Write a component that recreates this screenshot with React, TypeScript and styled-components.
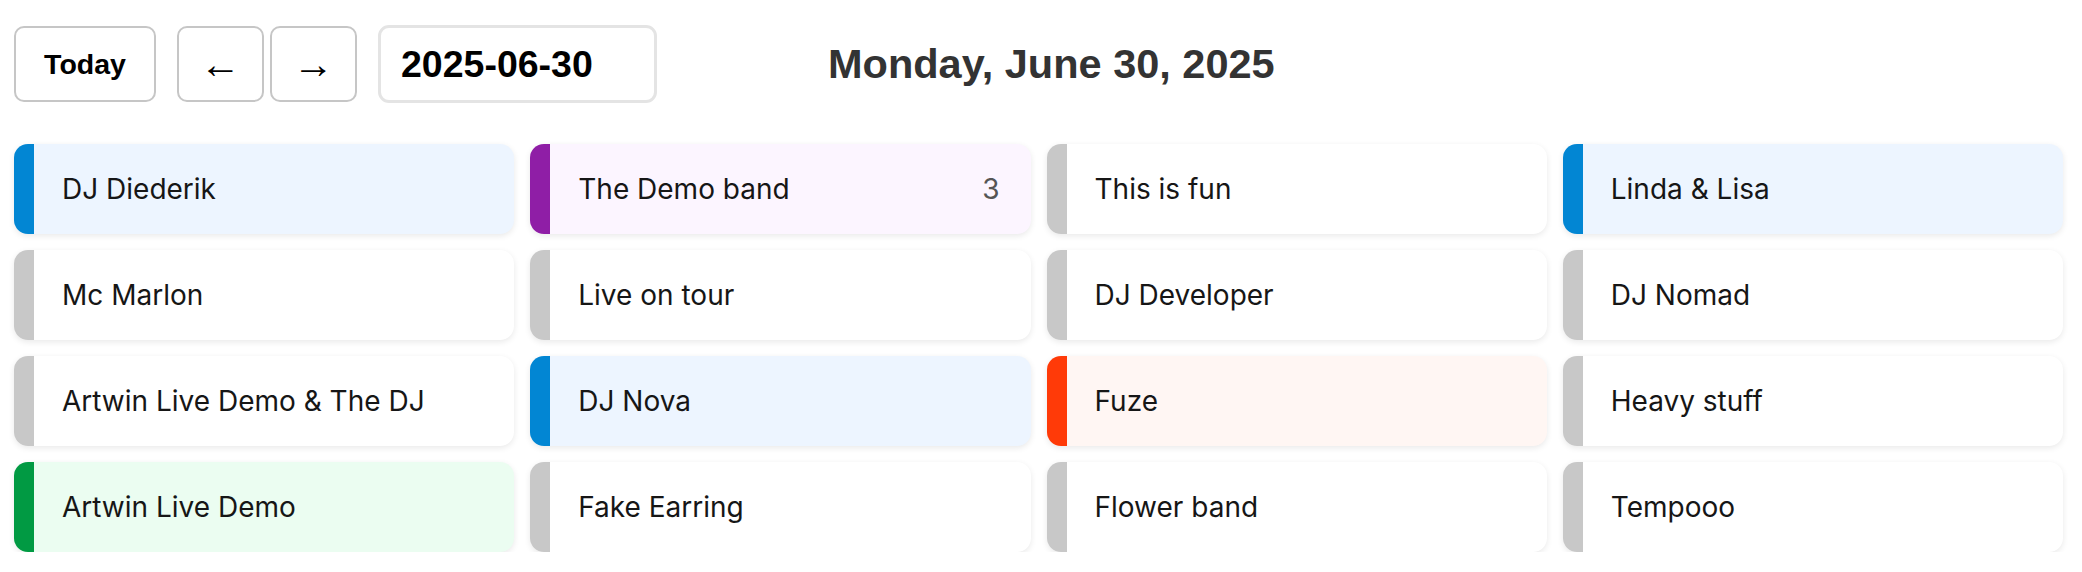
import React from "react";
import styled, { createGlobalStyle } from "styled-components";

type Tone = "blue" | "purple" | "gray" | "red" | "green";

type Act = {
    name: string;
    tone: Tone;
    count?: number;
};

const tones: Record<Tone, { bar: string; bg: string }> = {
    blue: { bar: "#0286d3", bg: "#edf5ff" },
    purple: { bar: "#8f1ea6", bg: "#fcf5ff" },
    gray: { bar: "#c8c8c8", bg: "#ffffff" },
    red: { bar: "#ff3a08", bg: "#fff6f3" },
    green: { bar: "#019a43", bg: "#ebfdf1" },
};

const acts: Act[] = [
    { name: "DJ Diederik", tone: "blue" },
    { name: "The Demo band", tone: "purple", count: 3 },
    { name: "This is fun", tone: "gray" },
    { name: "Linda & Lisa", tone: "blue" },
    { name: "Mc Marlon", tone: "gray" },
    { name: "Live on tour", tone: "gray" },
    { name: "DJ Developer", tone: "gray" },
    { name: "DJ Nomad", tone: "gray" },
    { name: "Artwin Live Demo & The DJ", tone: "gray" },
    { name: "DJ Nova", tone: "blue" },
    { name: "Fuze", tone: "red" },
    { name: "Heavy stuff", tone: "gray" },
    { name: "Artwin Live Demo", tone: "green" },
    { name: "Fake Earring", tone: "gray" },
    { name: "Flower band", tone: "gray" },
    { name: "Tempooo", tone: "gray" },
];

const GlobalStyle = createGlobalStyle`
    body {
        margin: 0;
        background: #ffffff;
        font-family: Inter, "Noto Sans", sans-serif;
    }
`;

export default function App() {
    return (
        <>
            <GlobalStyle />
            <SPage>
                <SHeader>
                    <STodayButton>Today</STodayButton>
                    <SArrows>
                        <SArrowButton aria-label="previous day">←</SArrowButton>
                        <SArrowButton aria-label="next day">→</SArrowButton>
                    </SArrows>
                    <SDateInput type="text" defaultValue="2025-06-30" />
                    <STitle>Monday, June 30, 2025</STitle>
                </SHeader>

                <SGrid>
                    {acts.map((act) => (
                        <SCard key={act.name} tone={act.tone}>
                            <SBar tone={act.tone} />
                            <SCardBody>
                                <SName>{act.name}</SName>
                                {act.count !== undefined && <SCount>{act.count}</SCount>}
                            </SCardBody>
                        </SCard>
                    ))}
                </SGrid>
            </SPage>
        </>
    );
}

const SPage = styled.div`
    padding: 25px 19px 0 14px;
    box-sizing: border-box;
`;

const SHeader = styled.div`
    display: flex;
    align-items: center;
    height: 78px;
    margin-bottom: 41px;
`;

const SButton = styled.button`
    height: 76px;
    background: #ffffff;
    border: 2px solid #c6c6c6;
    border-radius: 10px;
    box-sizing: border-box;
    color: #000000;
    cursor: pointer;
    padding: 0;
`;

const STodayButton = styled(SButton)`
    width: 142px;
    font-family: "Liberation Sans", Arial, sans-serif;
    font-weight: bold;
    font-size: 28.5px;
`;

const SArrows = styled.div`
    display: flex;
    gap: 6px;
    margin-left: 21px;
`;

const SArrowButton = styled(SButton)`
    width: 87px;
    font-family: "Liberation Sans", Arial, sans-serif;
    font-size: 41px;
    line-height: 1;
`;

const SDateInput = styled.input`
    width: 279px;
    height: 78px;
    margin-left: 21px;
    padding: 0 20px;
    box-sizing: border-box;
    border: 3px solid #e4e4e4;
    border-radius: 11px;
    font-family: "Liberation Sans", Arial, sans-serif;
    font-weight: bold;
    font-size: 37.5px;
    color: #000000;
    outline: none;
`;

const STitle = styled.h1`
    margin: 0 0 0 171px;
    font-family: "Liberation Sans", Arial, sans-serif;
    font-weight: bold;
    font-size: 41.5px;
    color: #333333;
`;

const SGrid = styled.div`
    display: grid;
    grid-template-columns: repeat(4, 1fr);
    gap: 16px;
`;

const SCard = styled.div<{ tone: Tone }>`
    display: flex;
    height: 90px;
    border-radius: 14px;
    overflow: hidden;
    background: ${(p) => tones[p.tone].bg};
    box-shadow: 0 2px 6px rgba(0, 0, 0, 0.09);
`;

const SBar = styled.div<{ tone: Tone }>`
    width: 20px;
    flex-shrink: 0;
    background: ${(p) => tones[p.tone].bar};
`;

const SCardBody = styled.div`
    flex: 1;
    display: flex;
    align-items: center;
    justify-content: space-between;
    padding: 0 31px 0 28px;
`;

const SName = styled.span`
    font-size: 28px;
    color: #161616;
`;

const SCount = styled.span`
    font-size: 28px;
    color: #555555;
`;
